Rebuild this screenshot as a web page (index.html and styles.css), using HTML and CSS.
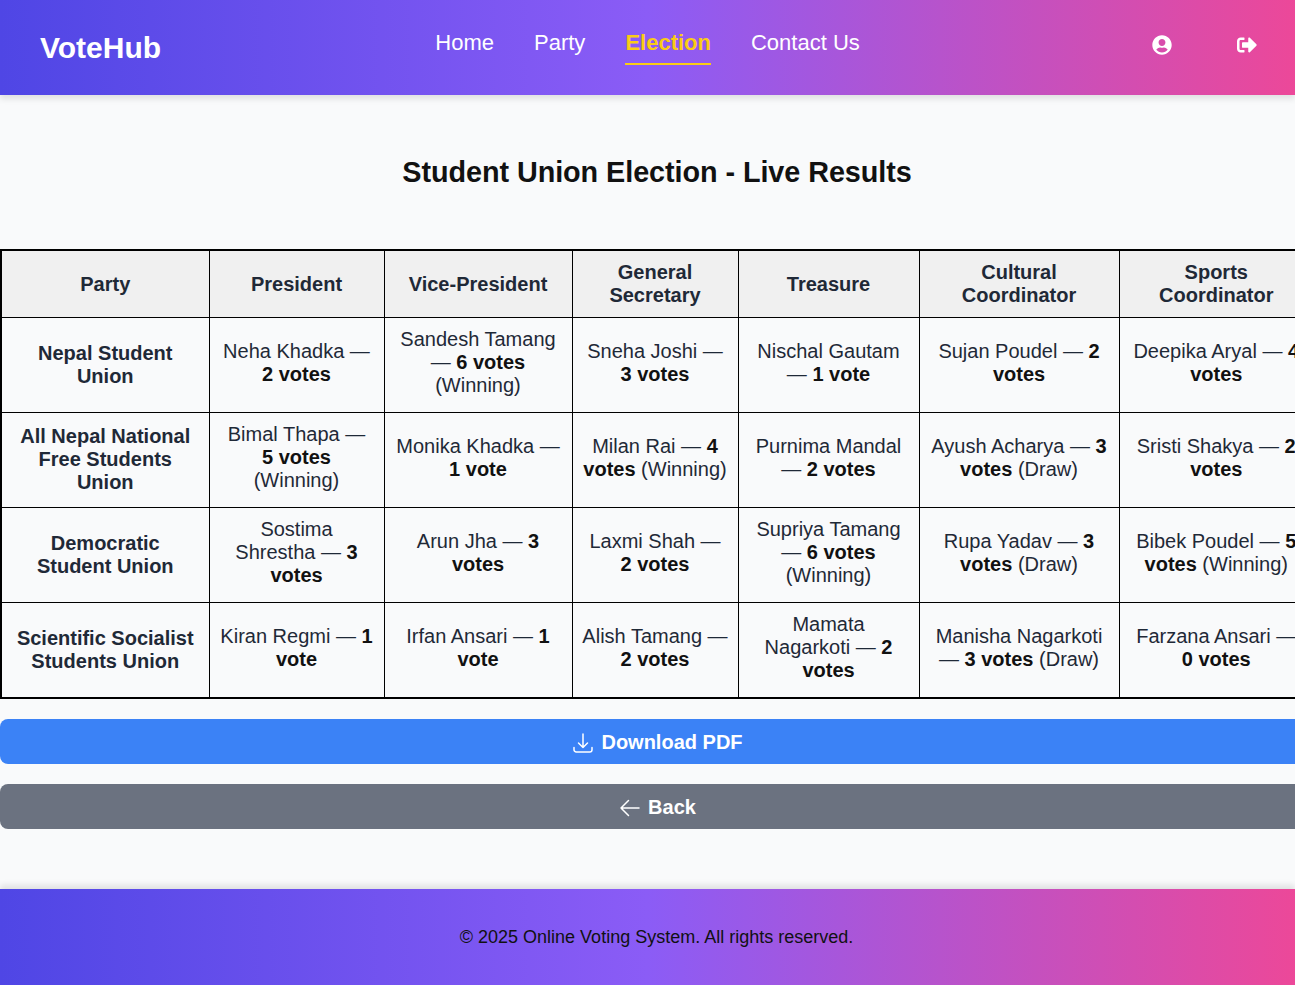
FILE: index.html
```html
<!DOCTYPE html>
<html lang="en">
<head>
  <meta charset="UTF-8" />
  <title>Live Results | VoteHub</title>
  <link rel="stylesheet" href="styles.css">
</head>
<body>

  <header class="topbar">
    <a class="logo" href="#">VoteHub</a>
    <nav class="main-nav">
      <a href="#">Home</a>
      <a href="#">Party</a>
      <a href="#" class="active">Election</a>
      <a href="#">Contact Us</a>
    </nav>
    <div class="topbar-icons">
      <a href="#" aria-label="Profile">
        <svg class="fa-icon" viewBox="0 0 496 512"><path d="M248 8C111 8 0 119 0 256s111 248 248 248 248-111 248-248S385 8 248 8zm0 96c48.6 0 88 39.4 88 88s-39.4 88-88 88-88-39.4-88-88 39.4-88 88-88zm0 344c-58.7 0-111.3-26.6-146.5-68.2 18.8-35.4 55.6-59.8 98.5-59.8 2.4 0 4.8.4 7.1 1.1 13 4.2 26.6 6.9 40.9 6.9 14.3 0 28-2.7 40.9-6.9 2.3-.7 4.7-1.1 7.1-1.1 42.9 0 79.7 24.4 98.5 59.8C359.3 421.4 306.7 448 248 448z"/></svg>
      </a>
      <a href="#" aria-label="Logout">
        <svg class="fa-icon" viewBox="0 0 512 512"><path d="M497 273L329 441c-15 15-41 4.5-41-17v-96H152c-13.3 0-24-10.7-24-24v-96c0-13.3 10.7-24 24-24h136V88c0-21.4 25.9-32 41-17l168 168c9.3 9.4 9.3 24.6 0 34zM192 436v-40c0-6.6-5.4-12-12-12H96c-17.7 0-32-14.3-32-32V160c0-17.7 14.3-32 32-32h84c6.6 0 12-5.4 12-12V76c0-6.6-5.4-12-12-12H96c-53 0-96 43-96 96v192c0 53 43 96 96 96h84c6.6 0 12-5.4 12-12z"/></svg>
      </a>
    </div>
  </header>

  <main class="content">
    <h1>Student Union Election - Live Results</h1>

    <table class="results">
      <colgroup>
        <col class="col-party"><col class="col-pres"><col class="col-vice"><col class="col-gen"><col class="col-treas"><col class="col-cult"><col class="col-sport">
      </colgroup>
      <thead>
        <tr>
          <th>Party</th>
          <th>President</th>
          <th>Vice-President</th>
          <th>General Secretary</th>
          <th>Treasure</th>
          <th>Cultural Coordinator</th>
          <th>Sports Coordinator</th>
        </tr>
      </thead>
      <tbody>
        <tr>
          <th>Nepal Student Union</th>
          <td>Neha Khadka — <strong>2 votes</strong></td>
          <td>Sandesh Tamang — <strong>6 votes</strong> (Winning)</td>
          <td>Sneha Joshi — <strong>3 votes</strong></td>
          <td>Nischal Gautam — <strong>1 vote</strong></td>
          <td>Sujan Poudel — <strong>2 votes</strong></td>
          <td>Deepika Aryal — <strong>4 votes</strong></td>
        </tr>
        <tr>
          <th>All Nepal National Free Students Union</th>
          <td>Bimal Thapa — <strong>5 votes</strong> (Winning)</td>
          <td>Monika Khadka — <strong>1 vote</strong></td>
          <td>Milan Rai — <strong>4 votes</strong> (Winning)</td>
          <td>Purnima Mandal — <strong>2 votes</strong></td>
          <td>Ayush Acharya — <strong>3 votes</strong> (Draw)</td>
          <td>Sristi Shakya — <strong>2 votes</strong></td>
        </tr>
        <tr>
          <th>Democratic Student Union</th>
          <td>Sostima Shrestha — <strong>3 votes</strong></td>
          <td>Arun Jha — <strong>3 votes</strong></td>
          <td>Laxmi Shah — <strong>2 votes</strong></td>
          <td>Supriya Tamang — <strong>6 votes</strong> (Winning)</td>
          <td>Rupa Yadav — <strong>3 votes</strong> (Draw)</td>
          <td>Bibek Poudel — <strong>5 votes</strong> (Winning)</td>
        </tr>
        <tr class="last-row">
          <th>Scientific Socialist Students Union</th>
          <td>Kiran Regmi — <strong>1 vote</strong></td>
          <td>Irfan Ansari — <strong>1 vote</strong></td>
          <td>Alish Tamang — <strong>2 votes</strong></td>
          <td>Mamata Nagarkoti — <strong>2 votes</strong></td>
          <td>Manisha Nagarkoti — <strong>3 votes</strong> (Draw)</td>
          <td>Farzana Ansari — <strong>0 votes</strong></td>
        </tr>
      </tbody>
    </table>

    <a href="#" class="wide-btn btn-blue">
      <svg class="btn-icon" viewBox="0 0 24 24"><path d="M3 16.5v2.25A2.25 2.25 0 005.25 21h13.5A2.25 2.25 0 0021 18.75V16.5M16.5 12L12 16.5m0 0L7.5 12m4.5 4.5V3"/></svg>
      Download PDF
    </a>
    <a href="#" class="wide-btn btn-gray">
      <svg class="btn-icon" viewBox="0 0 24 24"><path d="M10.5 19.5L3 12m0 0l7.5-7.5M3 12h18"/></svg>
      Back
    </a>
  </main>

  <footer class="site-footer">
    <p>© 2025 Online Voting System. All rights reserved.</p>
  </footer>

</body>
</html>
```

FILE: styles.css
```css
html, body {
  overflow-x: hidden;
}

body {
  margin: 0;
  width: 1295px;
  background: #f9fafb;
  color: #1f2937;
  font-family: "Liberation Sans", Arial, sans-serif;
}

a {
  text-decoration: none;
}

.topbar {
  position: relative;
  z-index: 1;
  display: flex;
  justify-content: space-between;
  align-items: center;
  height: 95px;
  box-sizing: border-box;
  padding: 0 38px 0 40px;
  background: linear-gradient(to right, #4f46e5, #8b5cf6, #ec4899);
  box-shadow: 0 4px 6px rgba(0, 0, 0, 0.1);
}

.logo {
  color: #fff;
  font-size: 30px;
  font-weight: bold;
}

.main-nav {
  display: flex;
  gap: 40px;
  margin: 0 0 9px -18px;
}

.main-nav a {
  color: #fff;
  font-size: 22px;
  padding: 8px 0 7px;
  border-bottom: 2px solid transparent;
}

.main-nav a.active {
  color: #facc15;
  font-weight: bold;
  border-bottom-color: #facc15;
}

.topbar-icons {
  display: flex;
  gap: 65px;
  margin-bottom: 6px;
}

.topbar-icons a {
  display: flex;
}

.fa-icon {
  width: 20px;
  height: 20px;
  fill: #fff;
}

.content {
  width: 1314px;
  height: 794px;
  padding-top: 60px;
  box-sizing: border-box;
}

h1 {
  margin: 0 0 60px;
  color: #111;
  font-size: 28.8px;
  letter-spacing: -0.07px;
  line-height: 34px;
  text-align: center;
}

.results {
  width: 1313px;
  table-layout: fixed;
  border-collapse: collapse;
  border: 2px solid #000;
  font-size: 20px;
  line-height: 23px;
  text-align: center;
}

.col-party { width: 208px; }
.col-pres { width: 175px; }
.col-vice { width: 188px; }
.col-gen { width: 166px; }
.col-treas { width: 181px; }
.col-cult { width: 200px; }
.col-sport { width: 195px; }

.results th,
.results td {
  border: 1px solid #000;
  padding: 0 10px;
  height: 95px;
  box-sizing: border-box;
}

.results td {
  padding-bottom: 4px;
}

/* Alish Tamang has to stay on one line with the dash */
.results td:nth-child(4) {
  padding-left: 9px;
  padding-right: 9px;
}

.results .last-row th,
.results .last-row td {
  height: 96px;
}

.results thead th {
  height: 67px;
  padding-top: 1px;
  background: #f0f0f0;
}

.results strong {
  color: #111;
}

.wide-btn {
  display: flex;
  justify-content: center;
  align-items: center;
  gap: 6px;
  height: 45px;
  box-sizing: border-box;
  padding-top: 2px;
  margin-top: 20px;
  border-radius: 8px;
  color: #fff;
  font-size: 20px;
  font-weight: bold;
}

.btn-blue {
  background: #3b82f6;
}

.btn-gray {
  background: #6b7280;
}

.btn-icon {
  width: 24px;
  height: 24px;
  fill: none;
  stroke: #fff;
  stroke-width: 1.5;
  stroke-linecap: round;
  stroke-linejoin: round;
}

.site-footer {
  height: 96px;
  display: flex;
  align-items: center;
  justify-content: center;
  padding-left: 18px;
  background: linear-gradient(to right, #4f46e5, #8b5cf6, #ec4899);
  box-shadow: 0 -4px 6px rgba(0, 0, 0, 0.1);
  box-sizing: border-box;
}

.site-footer p {
  margin: 0;
  color: #111;
  font-size: 18px;
}
```
